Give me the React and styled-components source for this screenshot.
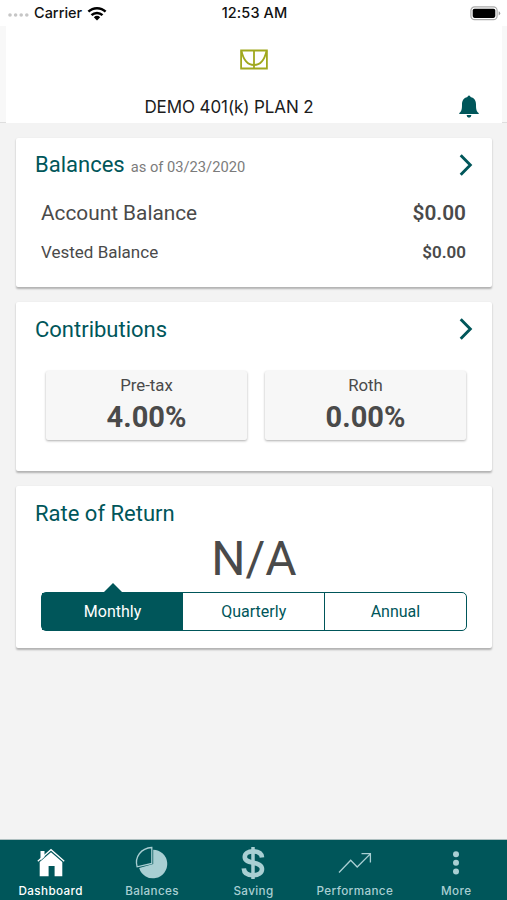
import React from "react";
import styled, { createGlobalStyle } from "styled-components";

const teal = "#00565a";
const pale = "#a9cfd3";

const GlobalStyle = createGlobalStyle`
  * { box-sizing: border-box; }
  body { margin: 0; background: #f3f3f3; }
`;

const Screen = styled.div`
  width: 507px;
  height: 900px;
  display: flex;
  flex-direction: column;
  overflow: hidden;
  background: #f3f3f3;
  color: #4a4a4a;
  font-family: Roboto, sans-serif;
  white-space: nowrap;
`;

const StatusBar = styled.div`
  height: 26px;
  flex: none;
  padding: 0 6px 0 8px;
  display: grid;
  grid-template-columns: 1fr auto 1fr;
  align-items: center;
  background: #fff;
  color: #111;
  font: 500 14.5px/26px Inter, sans-serif;
`;

const StatusGroup = styled.div`
  display: flex;
  align-items: center;
  gap: 5px;
  justify-content: ${(p) => (p.$end ? "flex-end" : "flex-start")};
`;

const Clock = styled.span`
  letter-spacing: 0.1px;
`;

const HeaderFrame = styled.header`
  height: 97px;
  flex: none;
  padding: 0 5px 0 6px;
  background: #f8f8f8;
  border-bottom: 1px solid #dedede;
`;

const Header = styled.div`
  height: 97px;
  background: #fff;
  display: flex;
  flex-direction: column;
  align-items: center;
  padding-top: 22px;
`;

const PlanRow = styled.div`
  align-self: stretch;
  display: flex;
  align-items: center;
  margin-top: 22px;
  height: 28px;
  padding: 0 23px 0 20px;
`;

const PlanName = styled.h1`
  flex: 1;
  margin: 0;
  padding-right: 27px;
  text-align: center;
  color: #1c1c1c;
  font: 400 17px/28px Inter, sans-serif;
  letter-spacing: -0.1px;
`;

const Content = styled.main`
  flex: 1;
  padding: 15px 15px 0 16px;
  display: flex;
  flex-direction: column;
  gap: 15px;
`;

const Card = styled.section`
  height: ${(p) => p.$height}px;
  background: #fff;
  border-radius: 2px;
  box-shadow: 0 1.5px 2px rgba(0, 0, 0, 0.27);
  display: flex;
  flex-direction: column;
`;

const CardHead = styled.div`
  height: 54px;
  flex: none;
  padding: 0 19px;
  display: flex;
  align-items: center;
  justify-content: space-between;
`;

const CardTitle = styled.h2`
  display: flex;
  align-items: baseline;
  margin: 0;
  padding-top: 1px;
  color: ${teal};
  font: 400 22px/30px Roboto, sans-serif;
`;

const AsOf = styled.small`
  margin-left: 6px;
  color: #7b7b7b;
  font-size: 14.7px;
`;

const BalanceRow = styled.div`
  display: flex;
  align-items: center;
  justify-content: space-between;
  height: ${(p) => (p.$large ? 42 : 36)}px;
  padding: 0 26px 0 25px;
  font-size: ${(p) => (p.$large ? 20.8 : 17)}px;
  strong { font-weight: 600; }
`;

const Tiles = styled.div`
  display: grid;
  grid-template-columns: 1fr 1fr;
  gap: 18px;
  margin: 15px 26px 0 30px;
`;

const Tile = styled.div`
  height: 69px;
  padding-top: 3px;
  background: #f7f7f7;
  border-radius: 2px;
  box-shadow: 0 1px 2.5px rgba(0, 0, 0, 0.32);
  text-align: center;
`;

const TileLabel = styled.div`
  font-size: 16.8px;
  line-height: 23px;
`;

const TileValue = styled.div`
  font-size: 29px;
  font-weight: 700;
  line-height: 41px;
`;

const ReturnValue = styled.div`
  height: 52px;
  text-align: center;
  font-size: 48px;
  line-height: 38px;
`;

const Segments = styled.div`
  height: 39px;
  margin: 0 25.5px 0 25px;
  display: grid;
  grid-template-columns: 1fr 1fr 1fr;
  border: 1.5px solid ${teal};
  border-radius: 5px;
`;

const Segment = styled.button`
  position: relative;
  padding: 0 0 1px;
  border: 0;
  border-left: ${(p) => (p.$divided ? `1px solid ${teal}` : "0")};
  background: ${(p) => (p.$active ? teal : "transparent")};
  color: ${(p) => (p.$active ? "#fff" : teal)};
  font: 400 16px Roboto, sans-serif;
  &::before {
    content: ${(p) => (p.$active ? '""' : "none")};
    position: absolute;
    left: calc(50% - 9px);
    top: -10px;
    border: 9px solid transparent;
    border-top: 0;
    border-bottom-color: ${teal};
  }
`;

const Nav = styled.nav`
  height: 61px;
  flex: none;
  border-top: 1px solid #aebfc0;
  background: ${teal};
  display: grid;
  grid-template-columns: repeat(5, 1fr);
`;

const NavItem = styled.div`
  display: flex;
  flex-direction: column;
  align-items: center;
  padding-top: 4px;
  color: ${(p) => (p.$active ? "#fff" : pale)};
  font: 500 11.7px/16px Inter, sans-serif;
  letter-spacing: 0.38px;
  svg { display: block; margin-bottom: 1px; }
`;

const Signal = () => (
  <svg width="21" height="8" viewBox="0 0 21 8" fill="#c6c6c6">
    {[2, 7.6, 13.2, 18.8].map((x) => <circle key={x} cx={x} cy="6" r="1.8" />)}
  </svg>
);

const Wifi = () => (
  <svg width="20" height="15" viewBox="0 0 20 15" fill="none" stroke="#000" strokeWidth="2.5">
    <path d="M1.4 5.7a12.4 12.4 0 0 1 17.2 0M4.5 9.1a8 8 0 0 1 11 0" />
    <path d="M6.8 11.3a4.8 4.8 0 0 1 6.4 0L10 14.4z" fill="#000" stroke="none" />
  </svg>
);

const Battery = () => (
  <svg width="31" height="15" viewBox="0 0 31 15">
    <rect x="0.9" y="0.9" width="26.2" height="12.8" rx="3.7" fill="#fff" stroke="#aaa" strokeWidth="1.2" />
    <rect x="2.7" y="2.7" width="22.6" height="9.2" rx="1.8" fill="#000" />
    <path d="M28.7 5.2q1.5.5 1.5 2.1t-1.5 2.1z" fill="#999" />
  </svg>
);

const Logo = () => (
  <svg width="30" height="23" viewBox="0 0 30 23" fill="none" stroke="#a0a81e" strokeWidth="1.8">
    <path d="M2.1 2.5h25.8v18H2.1zM15 2.5v18" />
    <path d="M2.5 3C4.5 12 9 17 15 17S25.500 12 27.500 3" />
  </svg>
);

const Bell = () => (
  <svg width="20" height="24" viewBox="0 0 20 24" fill={teal}>
    <path d="M8.500 1.900Q8.500.4 10 .4t1.500 1.500C15.800 2.800 17 6 17 9.600c0 4.800.5 7 2.700 8.500v.8H.3v-.8C2.500 16.600 3 14.400 3 9.600c0-3.600 1.200-6.800 5.500-7.700zM7.600 20h4.800Q12.200 22.700 10 22.700T7.600 20z" />
  </svg>
);

const Chevron = () => (
  <svg width="14" height="22" viewBox="0 0 14 22" fill="none" stroke={teal} strokeWidth="2.9">
    <path d="M1.700 1.300 11.300 11l-9.600 9.700" />
  </svg>
);

const HouseIcon = () => (
  <svg width="30" height="38" viewBox="0 0 30 38">
    <path d="M4.500 7h4v6l-4 3.500z" fill="#fff" />
    <path d="M1.800 17.300 15 5.700l13.200 11.600" fill="none" stroke="#fff" strokeWidth="1.3" />
    <path d="M3.700 18 15 8.200 26.300 18v14.300h-7.700V22h-6v10.300H3.700z" fill="#fff" />
  </svg>
);

const PieIcon = () => (
  <svg width="36" height="38" viewBox="0 0 36 38">
    <path d="M19.200 5.700A14.300 14.300 0 1 1 5.200 23.900L19.200 20z" fill={pale} />
    <path d="M17.800 3.500v15.900L3.100 22.800C.3 13 7 4.200 17.800 3.500z" fill={teal} stroke={pale} strokeWidth="1.300" />
  </svg>
);

const DollarIcon = () => (
  <svg width="28" height="38" viewBox="0 0 28 38" fill="none" stroke={pale}>
    <path d="M14 3v32" strokeWidth="3.500" />
    <path d="M23 13.500c-.4-4-4-6.100-9-6.100s-8.200 2-8.200 5.600c0 4.100 4.200 4.800 8.200 5.700 4.800 1.100 9 2.200 9 6.400 0 4-3.800 6.200-8.800 6.200-5.900 0-9.200-2.500-9.400-7" strokeWidth="4.600" />
  </svg>
);

const TrendIcon = () => (
  <svg width="36" height="38" viewBox="0 0 36 38" fill="none" stroke={pale} strokeWidth="1.300">
    <path d="m2 28.500 11.700-12.200 6.500 6.700L33.300 9.900M24.500 9.700h8.900v8.900" />
  </svg>
);

const MoreIcon = () => (
  <svg width="10" height="38" viewBox="0 0 10 38" fill={pale}>
    {[10.2, 18.8, 27.400].map((y) => <circle key={y} cx="5" cy={y} r="3" />)}
  </svg>
);

const tabs = [
  ["Dashboard", HouseIcon],
  ["Balances", PieIcon],
  ["Saving", DollarIcon],
  ["Performance", TrendIcon],
  ["More", MoreIcon],
];

export default function App() {
  return (
    <>
      <GlobalStyle />
      <Screen>
        <StatusBar>
          <StatusGroup><Signal /><span>Carrier</span><Wifi /></StatusGroup>
          <Clock>12:53 AM</Clock>
          <StatusGroup $end><Battery /></StatusGroup>
        </StatusBar>
        <HeaderFrame>
          <Header>
            <Logo />
            <PlanRow><PlanName>DEMO 401(k) PLAN 2</PlanName><Bell /></PlanRow>
          </Header>
        </HeaderFrame>
        <Content>
          <Card $height={149}>
            <CardHead>
              <CardTitle>Balances<AsOf>as of 03/23/2020</AsOf></CardTitle>
              <Chevron />
            </CardHead>
            <BalanceRow $large><span>Account Balance</span><strong>$0.00</strong></BalanceRow>
            <BalanceRow><span>Vested Balance</span><strong>$0.00</strong></BalanceRow>
          </Card>
          <Card $height={169}>
            <CardHead><CardTitle>Contributions</CardTitle><Chevron /></CardHead>
            <Tiles>
              <Tile><TileLabel>Pre-tax</TileLabel><TileValue>4.00%</TileValue></Tile>
              <Tile><TileLabel>Roth</TileLabel><TileValue>0.00%</TileValue></Tile>
            </Tiles>
          </Card>
          <Card $height={162}>
            <CardHead><CardTitle>Rate of Return</CardTitle></CardHead>
            <ReturnValue>N/A</ReturnValue>
            <Segments>
              <Segment $active>Monthly</Segment>
              <Segment>Quarterly</Segment>
              <Segment $divided>Annual</Segment>
            </Segments>
          </Card>
        </Content>
        <Nav>
          {tabs.map(([label, Icon], i) => (
            <NavItem key={label} $active={i === 0}><Icon />{label}</NavItem>
          ))}
        </Nav>
      </Screen>
    </>
  );
}
